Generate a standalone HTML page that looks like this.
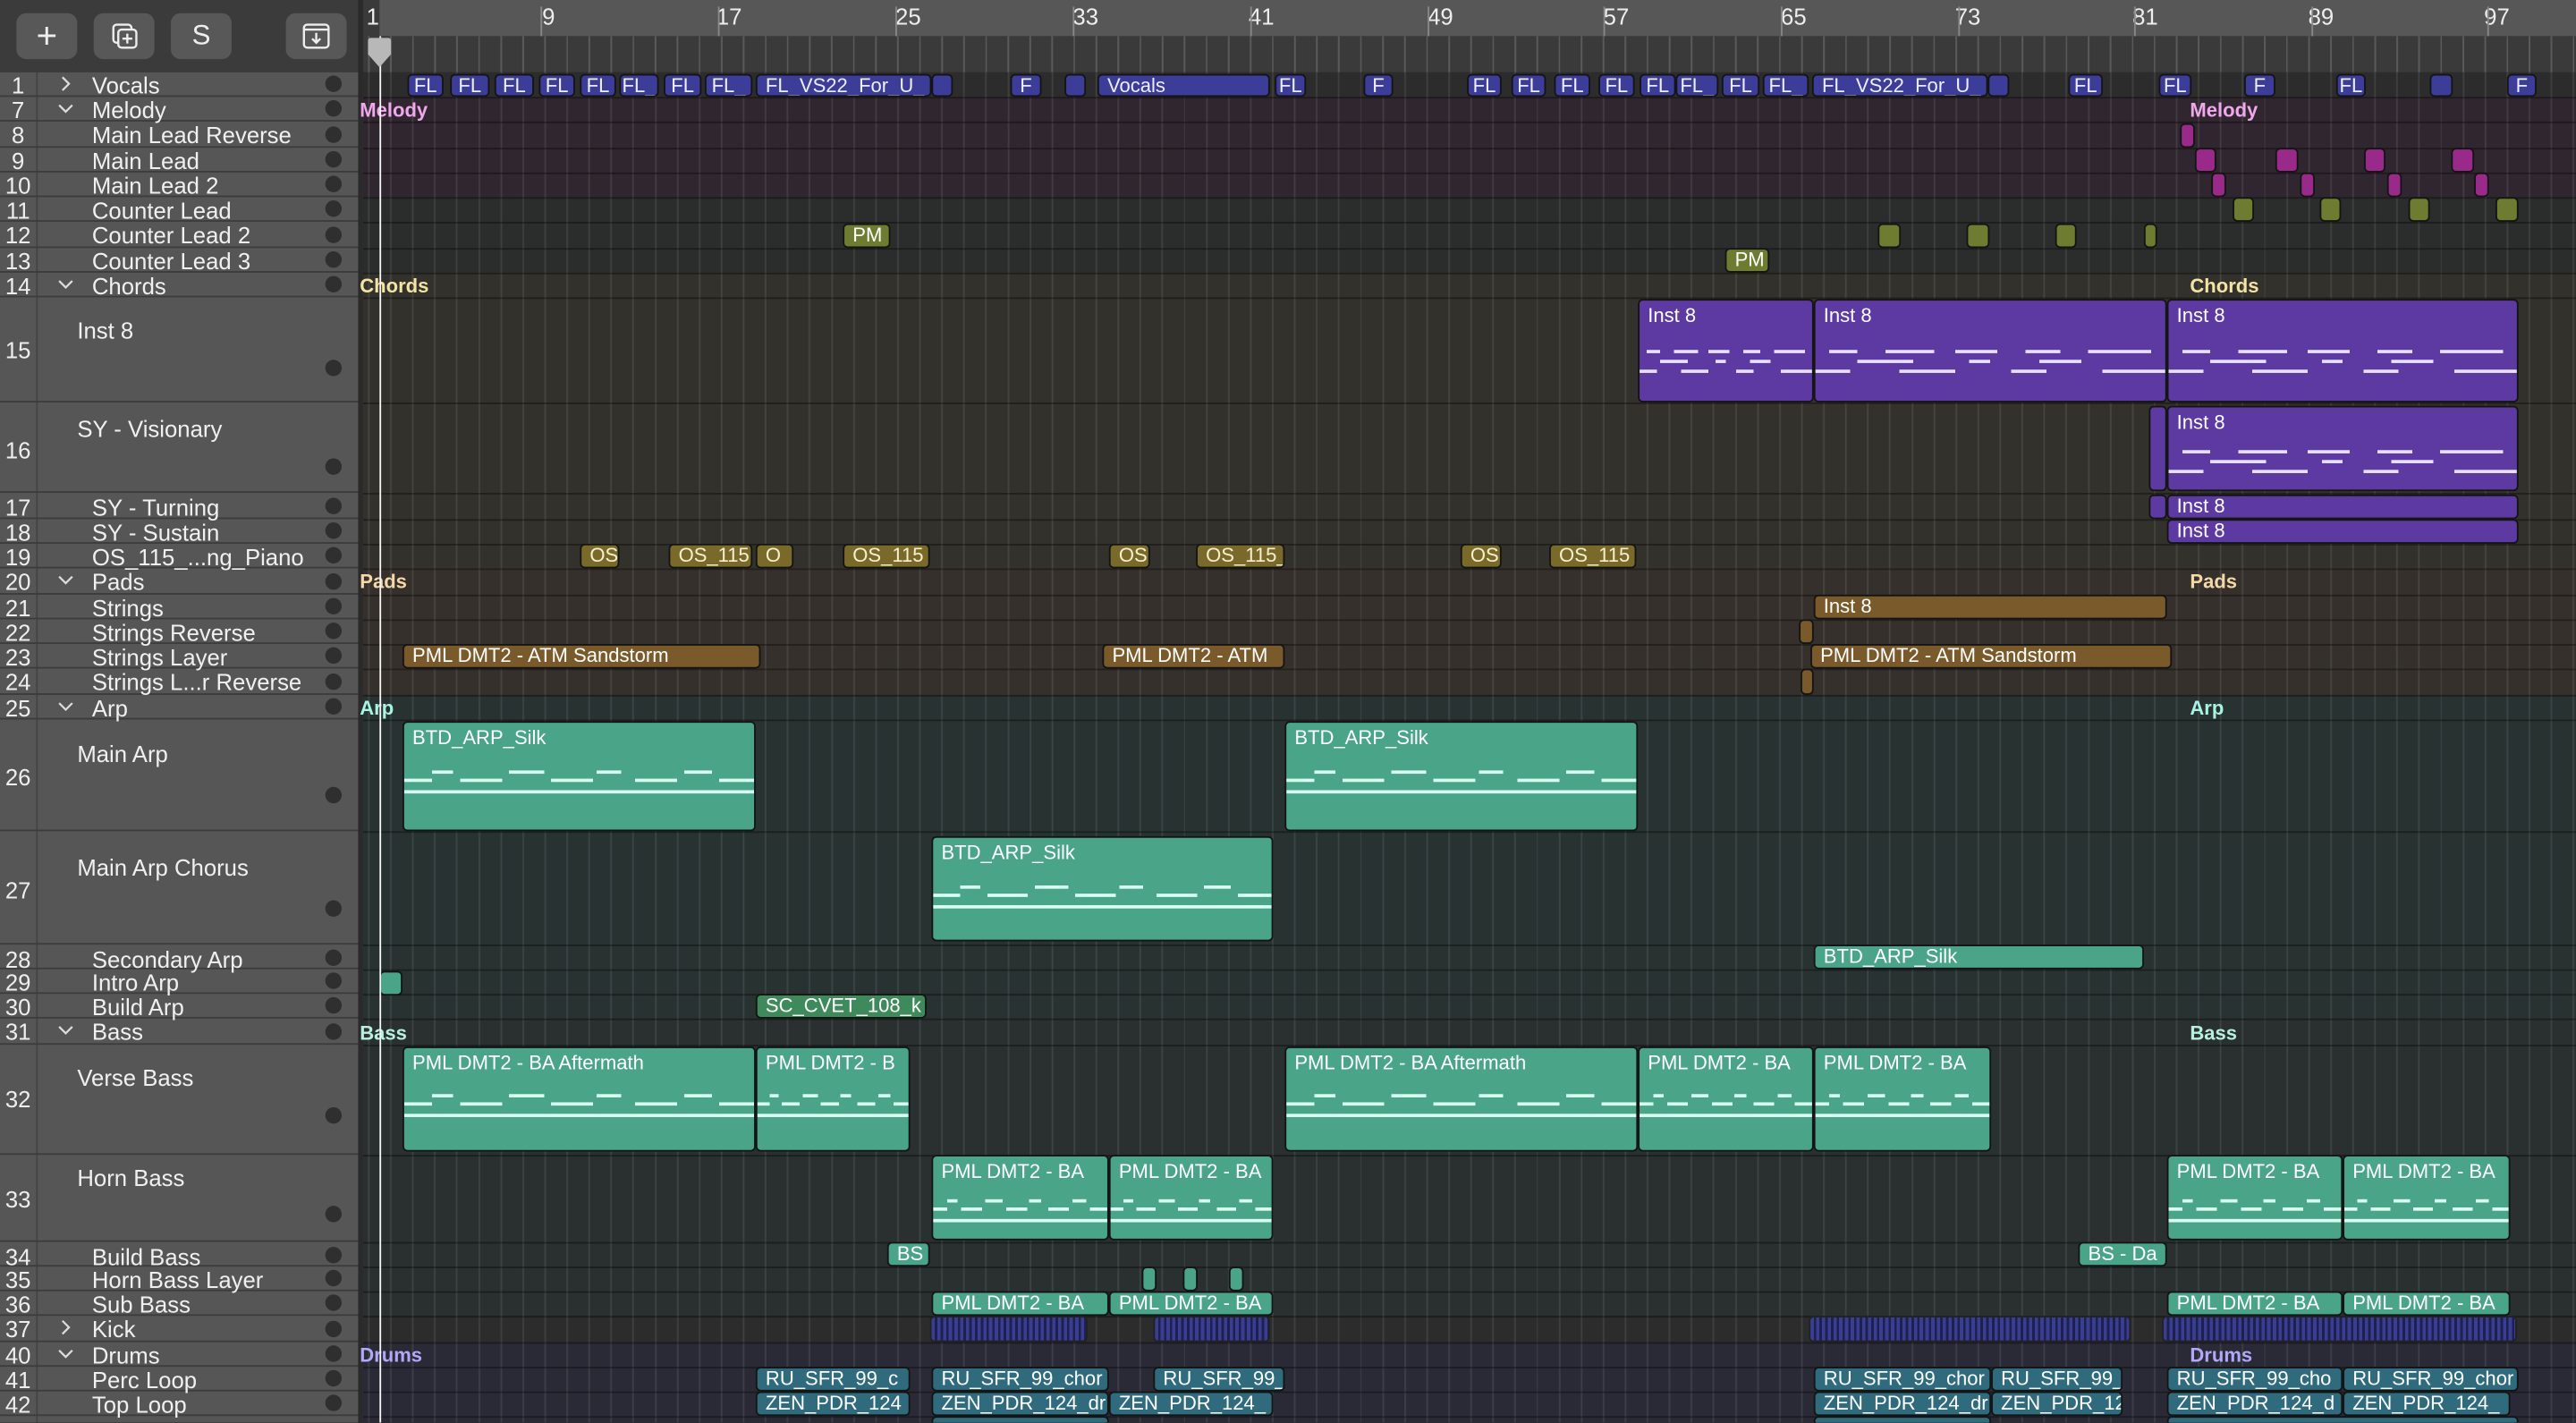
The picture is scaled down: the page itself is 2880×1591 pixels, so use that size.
<!DOCTYPE html>
<html><head><meta charset="utf-8"><style>
html,body{margin:0;padding:0;background:#2b2b2b;overflow:hidden}
#w{position:absolute;left:0;top:0;width:1568px;height:866px;transform:scale(1.836735);transform-origin:0 0;font-family:"Liberation Sans",sans-serif;overflow:hidden;background:#2b2b2b}
.a{position:absolute}
.tl{position:absolute;left:0;width:221px;background:#565656;color:#f0f0f0;font-size:14px}
.row{position:absolute;left:0;width:221px;border-bottom:1.5px solid #3c3c3c;box-sizing:border-box}
.n{position:absolute;left:0;width:22px;text-align:center;color:#eee;font-size:14px}
.nm{position:absolute;left:56px;white-space:nowrap}
.dot{position:absolute;left:198px;width:10px;height:10px;border-radius:50%;background:#2f2f2f}
.chev{position:absolute;left:35px;top:2px}
.bg{position:absolute;left:221px;right:0}
.hl{position:absolute;left:221px;right:0;height:1px;background:rgba(0,0,0,0.35)}
.r{position:absolute;box-sizing:border-box;border:1px solid #141414;border-radius:3px;color:#fff;font-size:12px;padding-left:5px;overflow:hidden;white-space:nowrap;line-height:13px}
.v{background:#3b3d98;color:#eef;text-align:center;padding:0}
.p{background:#5d3aa2}
.b{background:#7a5a2a}
.t{background:#4aa488}
.o{background:#7a6a2a;color:#f4f0d0}
.g{background:#6d7c30}
.m{background:#9a2a8a}
.d{background:#2f6b7c}
.k{background:repeating-linear-gradient(90deg,#3a3e90 0 2px,#1e2050 2px 3.5px);border-color:#222}
.lbl{position:absolute;font-size:12px;font-weight:bold}
.notes{position:absolute;left:0;right:0;height:20px;background:
linear-gradient(90deg,transparent 0 4%,#e8e0ff 4% 12%,transparent 12% 20%,#e8e0ff 20% 34%,transparent 34% 40%,#e8e0ff 40% 52%,transparent 52% 60%,#e8e0ff 60% 70%,transparent 70% 78%,#e8e0ff 78% 96%,transparent 96%) 0 2px/100% 2px no-repeat,
linear-gradient(90deg,transparent 0 12%,#e8e0ff 12% 28%,transparent 28% 44%,#e8e0ff 44% 50%,transparent 50% 64%,#e8e0ff 64% 76%,transparent 76%) 0 8px/100% 2px no-repeat,
linear-gradient(90deg,#e8e0ff 0 10%,transparent 10% 24%,#e8e0ff 24% 40%,transparent 40% 56%,#e8e0ff 56% 66%,transparent 66% 82%,#e8e0ff 82% 100%) 0 14px/100% 2px no-repeat}
.t .notes{background:
linear-gradient(90deg,transparent 0 8%,#d8fff0 8% 14%,transparent 14% 30%,#d8fff0 30% 40%,transparent 40% 55%,#d8fff0 55% 62%,transparent 62% 80%,#d8fff0 80% 88%,transparent 88%) 0 2px/100% 2px no-repeat,
linear-gradient(90deg,#d8fff0 0 8%,transparent 8% 16%,#d8fff0 16% 28%,transparent 28% 42%,#d8fff0 42% 54%,transparent 54% 66%,#d8fff0 66% 78%,transparent 78% 90%,#d8fff0 90%) 0 7px/100% 2px no-repeat,
linear-gradient(90deg,#d8fff0 0 100%) 0 14px/100% 2px no-repeat}
</style></head><body><div id="w">

<div class="a" style="left:0;top:0;width:221px;height:44px;background:#3b3b3b"></div>
<div class="a" style="left:10px;top:8px;width:37px;height:28px;background:#585858;border-radius:6px;color:#eee;font-size:22px;text-align:center;line-height:27px">+</div>
<div class="a" style="left:57px;top:8px;width:37px;height:28px;background:#585858;border-radius:6px">
<svg width="37" height="28" viewBox="0 0 37 28"><rect x="12" y="7" width="11" height="11" rx="2" fill="none" stroke="#eee" stroke-width="1.3"/><rect x="15" y="10" width="11" height="11" rx="2" fill="#585858" stroke="#eee" stroke-width="1.3"/><path d="M20.5 12.5v6M17.5 15.5h6" stroke="#eee" stroke-width="1.3"/></svg></div>
<div class="a" style="left:104px;top:8px;width:37px;height:28px;background:#585858;border-radius:6px;color:#eee;font-size:17px;text-align:center;line-height:28px">S</div>
<div class="a" style="left:174px;top:8px;width:37px;height:28px;background:#585858;border-radius:6px">
<svg width="37" height="28" viewBox="0 0 37 28"><rect x="11" y="7" width="15" height="14" rx="2" fill="none" stroke="#eee" stroke-width="1.3"/><path d="M11 10h15M18.5 12v6M16 15.5l2.5 2.5 2.5-2.5" fill="none" stroke="#eee" stroke-width="1.3"/></svg></div>

<div class="a" style="left:221px;top:0;right:0;height:22px;background:#575757"></div>
<div class="a" style="left:221px;top:22px;right:0;height:22px;background:#3a3a3a;background-image:repeating-linear-gradient(90deg,#5a5a5a 0 1px,transparent 1px 13.42px);background-position:3px 0"></div>
<div class="a" style="left:221px;top:0;width:10px;height:22px;background:#3a3a3a"></div>
<div class="a" style="left:0;top:0;width:1568px;height:22px;color:#eee;font-size:14px">
<span class="a" style="left:223px;top:2px">1</span><span class="a" style="left:330px;top:2px">9</span><span class="a" style="left:436px;top:2px">17</span><span class="a" style="left:545px;top:2px">25</span><span class="a" style="left:653px;top:2px">33</span><span class="a" style="left:760px;top:2px">41</span><span class="a" style="left:869px;top:2px">49</span><span class="a" style="left:976px;top:2px">57</span><span class="a" style="left:1084px;top:2px">65</span><span class="a" style="left:1190px;top:2px">73</span><span class="a" style="left:1298px;top:2px">81</span><span class="a" style="left:1405px;top:2px">89</span><span class="a" style="left:1512px;top:2px">97</span>
</div>
<div class="a" style="left:329px;top:4px;width:1px;height:18px;background:#888"></div>
<div class="a" style="left:437px;top:4px;width:1px;height:18px;background:#888"></div>
<div class="a" style="left:545px;top:4px;width:1px;height:18px;background:#888"></div>
<div class="a" style="left:653px;top:4px;width:1px;height:18px;background:#888"></div>
<div class="a" style="left:761px;top:4px;width:1px;height:18px;background:#888"></div>
<div class="a" style="left:869px;top:4px;width:1px;height:18px;background:#888"></div>
<div class="a" style="left:976px;top:4px;width:1px;height:18px;background:#888"></div>
<div class="a" style="left:1084px;top:4px;width:1px;height:18px;background:#888"></div>
<div class="a" style="left:1192px;top:4px;width:1px;height:18px;background:#888"></div>
<div class="a" style="left:1299px;top:4px;width:1px;height:18px;background:#888"></div>
<div class="a" style="left:1407px;top:4px;width:1px;height:18px;background:#888"></div>
<div class="a" style="left:1514px;top:4px;width:1px;height:18px;background:#888"></div>

<div class="bg" style="top:44px;height:15px;background:#2c2c2c"></div>
<div class="bg" style="top:59px;height:61px;background:#30262f"></div>
<div class="bg" style="top:120px;height:46px;background:#2b2c2c"></div>
<div class="bg" style="top:166px;height:180px;background:#33312b"></div>
<div class="bg" style="top:346px;height:77px;background:#35302b"></div>
<div class="bg" style="top:423px;height:197px;background:#283231"></div>
<div class="bg" style="top:620px;height:181px;background:#29302f"></div>
<div class="bg" style="top:801px;height:16px;background:#2c2c2c"></div>
<div class="bg" style="top:817px;height:49px;background:#2a2a36"></div>
<div class="bg" style="top:44px;bottom:0;background-image:repeating-linear-gradient(90deg,rgba(255,255,255,0.09) 0 1px,transparent 1px 13.42px);background-position:3px 0"></div>
<div class="hl" style="top:59px"></div><div class="hl" style="top:74px"></div><div class="hl" style="top:90px"></div><div class="hl" style="top:105px"></div><div class="hl" style="top:120px"></div><div class="hl" style="top:135px"></div><div class="hl" style="top:151px"></div><div class="hl" style="top:166px"></div><div class="hl" style="top:181px"></div><div class="hl" style="top:245px"></div><div class="hl" style="top:300px"></div><div class="hl" style="top:316px"></div><div class="hl" style="top:331px"></div><div class="hl" style="top:346px"></div><div class="hl" style="top:362px"></div><div class="hl" style="top:377px"></div><div class="hl" style="top:392px"></div><div class="hl" style="top:407px"></div><div class="hl" style="top:423px"></div><div class="hl" style="top:438px"></div><div class="hl" style="top:506px"></div><div class="hl" style="top:575px"></div><div class="hl" style="top:590px"></div><div class="hl" style="top:605px"></div><div class="hl" style="top:620px"></div><div class="hl" style="top:636px"></div><div class="hl" style="top:703px"></div><div class="hl" style="top:756px"></div><div class="hl" style="top:771px"></div><div class="hl" style="top:786px"></div><div class="hl" style="top:801px"></div><div class="hl" style="top:817px"></div><div class="hl" style="top:832px"></div><div class="hl" style="top:847px"></div><div class="hl" style="top:862px"></div>

<div class="tl" style="top:44px;height:822px">
<div class="a" style="left:22px;top:0;width:1px;height:822px;background:#444"></div>
</div>
<div class="a" style="left:0;top:44px;width:221px;height:822px;color:#f0f0f0;font-size:14px">
<div class="row" style="top:0;height:15px"><span class="n">1</span><svg class="chev" width="10" height="10" viewBox="0 0 10 10"><path d="M3 1l4 4-4 4" fill="none" stroke="#ddd" stroke-width="1.2"/></svg><span class="nm">Vocals</span><span class="dot" style="top:2px"></span></div>
<div class="row" style="top:15px;height:15px"><span class="n">7</span><svg class="chev" width="10" height="10" viewBox="0 0 10 10"><path d="M1 3l4 4 4-4" fill="none" stroke="#ddd" stroke-width="1.2"/></svg><span class="nm">Melody</span><span class="dot" style="top:2px"></span></div>
<div class="row" style="top:30px;height:16px"><span class="n">8</span><span class="nm">Main Lead Reverse</span><span class="dot" style="top:3px"></span></div>
<div class="row" style="top:46px;height:15px"><span class="n">9</span><span class="nm">Main Lead</span><span class="dot" style="top:2px"></span></div>
<div class="row" style="top:61px;height:15px"><span class="n">10</span><span class="nm">Main Lead 2</span><span class="dot" style="top:2px"></span></div>
<div class="row" style="top:76px;height:15px"><span class="n">11</span><span class="nm">Counter Lead</span><span class="dot" style="top:2px"></span></div>
<div class="row" style="top:91px;height:16px"><span class="n">12</span><span class="nm">Counter Lead 2</span><span class="dot" style="top:3px"></span></div>
<div class="row" style="top:107px;height:15px"><span class="n">13</span><span class="nm">Counter Lead 3</span><span class="dot" style="top:2px"></span></div>
<div class="row" style="top:122px;height:15px"><span class="n">14</span><svg class="chev" width="10" height="10" viewBox="0 0 10 10"><path d="M1 3l4 4 4-4" fill="none" stroke="#ddd" stroke-width="1.2"/></svg><span class="nm">Chords</span><span class="dot" style="top:2px"></span></div>
<div class="row" style="top:137px;height:64px"><span class="n" style="top:24px">15</span><span class="nm" style="left:47px;top:12px">Inst 8</span><span class="dot" style="top:38px"></span></div>
<div class="row" style="top:201px;height:55px"><span class="n" style="top:21px">16</span><span class="nm" style="left:47px;top:8px">SY - Visionary</span><span class="dot" style="top:34px"></span></div>
<div class="row" style="top:256px;height:16px"><span class="n" style="top:1px">17</span><span class="nm" style="top:1px">SY - Turning</span><span class="dot" style="top:3px"></span></div>
<div class="row" style="top:272px;height:15px"><span class="n">18</span><span class="nm">SY - Sustain</span><span class="dot" style="top:2px"></span></div>
<div class="row" style="top:287px;height:15px"><span class="n">19</span><span class="nm">OS_115_...ng_Piano</span><span class="dot" style="top:2px"></span></div>
<div class="row" style="top:302px;height:16px"><span class="n">20</span><svg class="chev" width="10" height="10" viewBox="0 0 10 10"><path d="M1 3l4 4 4-4" fill="none" stroke="#ddd" stroke-width="1.2"/></svg><span class="nm">Pads</span><span class="dot" style="top:3px"></span></div>
<div class="row" style="top:318px;height:15px"><span class="n">21</span><span class="nm">Strings</span><span class="dot" style="top:2px"></span></div>
<div class="row" style="top:333px;height:15px"><span class="n">22</span><span class="nm">Strings Reverse</span><span class="dot" style="top:2px"></span></div>
<div class="row" style="top:348px;height:15px"><span class="n">23</span><span class="nm">Strings Layer</span><span class="dot" style="top:2px"></span></div>
<div class="row" style="top:363px;height:16px"><span class="n">24</span><span class="nm">Strings L...r Reverse</span><span class="dot" style="top:3px"></span></div>
<div class="row" style="top:379px;height:15px"><span class="n">25</span><svg class="chev" width="10" height="10" viewBox="0 0 10 10"><path d="M1 3l4 4 4-4" fill="none" stroke="#ddd" stroke-width="1.2"/></svg><span class="nm">Arp</span><span class="dot" style="top:2px"></span></div>
<div class="row" style="top:394px;height:68px"><span class="n" style="top:27px">26</span><span class="nm" style="left:47px;top:13px">Main Arp</span><span class="dot" style="top:41px"></span></div>
<div class="row" style="top:462px;height:69px"><span class="n" style="top:28px">27</span><span class="nm" style="left:47px;top:14px">Main Arp Chorus</span><span class="dot" style="top:42px"></span></div>
<div class="row" style="top:531px;height:15px"><span class="n" style="top:1px">28</span><span class="nm" style="top:1px">Secondary Arp</span><span class="dot" style="top:3px"></span></div>
<div class="row" style="top:546px;height:15px"><span class="n">29</span><span class="nm">Intro Arp</span><span class="dot" style="top:2px"></span></div>
<div class="row" style="top:561px;height:15px"><span class="n">30</span><span class="nm">Build Arp</span><span class="dot" style="top:2px"></span></div>
<div class="row" style="top:576px;height:16px"><span class="n">31</span><svg class="chev" width="10" height="10" viewBox="0 0 10 10"><path d="M1 3l4 4 4-4" fill="none" stroke="#ddd" stroke-width="1.2"/></svg><span class="nm">Bass</span><span class="dot" style="top:3px"></span></div>
<div class="row" style="top:592px;height:67px"><span class="n" style="top:25px">32</span><span class="nm" style="left:47px;top:12px">Verse Bass</span><span class="dot" style="top:38px"></span></div>
<div class="row" style="top:659px;height:53px"><span class="n" style="top:19px">33</span><span class="nm" style="left:47px;top:6px">Horn Bass</span><span class="dot" style="top:31px"></span></div>
<div class="row" style="top:712px;height:15px"><span class="n" style="top:1px">34</span><span class="nm" style="top:1px">Build Bass</span><span class="dot" style="top:3px"></span></div>
<div class="row" style="top:727px;height:15px"><span class="n">35</span><span class="nm">Horn Bass Layer</span><span class="dot" style="top:2px"></span></div>
<div class="row" style="top:742px;height:15px"><span class="n">36</span><span class="nm">Sub Bass</span><span class="dot" style="top:2px"></span></div>
<div class="row" style="top:757px;height:16px"><span class="n">37</span><svg class="chev" width="10" height="10" viewBox="0 0 10 10"><path d="M3 1l4 4-4 4" fill="none" stroke="#ddd" stroke-width="1.2"/></svg><span class="nm">Kick</span><span class="dot" style="top:3px"></span></div>
<div class="row" style="top:773px;height:15px"><span class="n">40</span><svg class="chev" width="10" height="10" viewBox="0 0 10 10"><path d="M1 3l4 4 4-4" fill="none" stroke="#ddd" stroke-width="1.2"/></svg><span class="nm">Drums</span><span class="dot" style="top:2px"></span></div>
<div class="row" style="top:788px;height:15px"><span class="n">41</span><span class="nm">Perc Loop</span><span class="dot" style="top:2px"></span></div>
<div class="row" style="top:803px;height:15px"><span class="n">42</span><span class="nm">Top Loop</span><span class="dot" style="top:2px"></span></div>
</div>
<div class="a" style="left:218px;top:0;width:3px;height:866px;background:#2a2a2a"></div>

<div class="r v" style="left:248px;top:45px;width:22px;height:14px">FL</div>
<div class="r v" style="left:274px;top:45px;width:24px;height:14px">FL</div>
<div class="r v" style="left:301px;top:45px;width:24px;height:14px">FL</div>
<div class="r v" style="left:328px;top:45px;width:22px;height:14px">FL</div>
<div class="r v" style="left:353px;top:45px;width:22px;height:14px">FL</div>
<div class="r v" style="left:377px;top:45px;width:24px;height:14px">FL_</div>
<div class="r v" style="left:404px;top:45px;width:23px;height:14px">FL</div>
<div class="r v" style="left:429px;top:45px;width:29px;height:14px">FL_</div>
<div class="r v" style="left:460px;top:45px;width:107px;height:14px;text-align:left;padding-left:5px">FL_VS22_For_U_</div>
<div class="r v" style="left:567px;top:45px;width:13px;height:14px"></div>
<div class="r v" style="left:615px;top:45px;width:19px;height:14px">F</div>
<div class="r v" style="left:648px;top:45px;width:13px;height:14px"></div>
<div class="r v" style="left:668px;top:45px;width:105px;height:14px;text-align:left;padding-left:5px">Vocals</div>
<div class="r v" style="left:776px;top:45px;width:19px;height:14px">FL</div>
<div class="r v" style="left:830px;top:45px;width:18px;height:14px">F</div>
<div class="r v" style="left:893px;top:45px;width:21px;height:14px">FL</div>
<div class="r v" style="left:920px;top:45px;width:21px;height:14px">FL</div>
<div class="r v" style="left:946px;top:45px;width:22px;height:14px">FL</div>
<div class="r v" style="left:973px;top:45px;width:22px;height:14px">FL</div>
<div class="r v" style="left:998px;top:45px;width:22px;height:14px">FL</div>
<div class="r v" style="left:1020px;top:45px;width:26px;height:14px">FL_</div>
<div class="r v" style="left:1048px;top:45px;width:23px;height:14px">FL</div>
<div class="r v" style="left:1073px;top:45px;width:28px;height:14px">FL_</div>
<div class="r v" style="left:1103px;top:45px;width:107px;height:14px;text-align:left;padding-left:5px">FL_VS22_For_U_</div>
<div class="r v" style="left:1210px;top:45px;width:13px;height:14px"></div>
<div class="r v" style="left:1259px;top:45px;width:21px;height:14px">FL</div>
<div class="r v" style="left:1314px;top:45px;width:20px;height:14px">FL</div>
<div class="r v" style="left:1366px;top:45px;width:19px;height:14px">F</div>
<div class="r v" style="left:1422px;top:45px;width:18px;height:14px">FL</div>
<div class="r v" style="left:1479px;top:45px;width:14px;height:14px"></div>
<div class="r v" style="left:1526px;top:45px;width:18px;height:14px">F</div>

<div class="lbl" style="left:219px;top:60px;color:#f0a8ec">Melody</div>
<div class="lbl" style="left:1333px;top:60px;color:#f0a8ec">Melody</div>
<div class="lbl" style="left:219px;top:167px;color:#f4e4a4">Chords</div>
<div class="lbl" style="left:1333px;top:167px;color:#f4e4a4">Chords</div>
<div class="lbl" style="left:219px;top:347px;color:#f4d8a8">Pads</div>
<div class="lbl" style="left:1333px;top:347px;color:#f4d8a8">Pads</div>
<div class="lbl" style="left:219px;top:424px;color:#a8f4e4">Arp</div>
<div class="lbl" style="left:1333px;top:424px;color:#a8f4e4">Arp</div>
<div class="lbl" style="left:219px;top:622px;color:#b8f0e0">Bass</div>
<div class="lbl" style="left:1333px;top:622px;color:#b8f0e0">Bass</div>
<div class="lbl" style="left:219px;top:818px;color:#b0a8f8">Drums</div>
<div class="lbl" style="left:1333px;top:818px;color:#b0a8f8">Drums</div>

<div class="r m" style="left:1327px;top:75px;width:9px;height:15px"></div>
<div class="r m" style="left:1336px;top:90px;width:13px;height:15px"></div>
<div class="r m" style="left:1385px;top:90px;width:14px;height:15px"></div>
<div class="r m" style="left:1439px;top:90px;width:13px;height:15px"></div>
<div class="r m" style="left:1492px;top:90px;width:14px;height:15px"></div>
<div class="r m" style="left:1346px;top:105px;width:9px;height:15px"></div>
<div class="r m" style="left:1400px;top:105px;width:9px;height:15px"></div>
<div class="r m" style="left:1453px;top:105px;width:9px;height:15px"></div>
<div class="r m" style="left:1506px;top:105px;width:9px;height:15px"></div>
<div class="r g" style="left:1359px;top:120px;width:13px;height:15px"></div>
<div class="r g" style="left:1412px;top:120px;width:13px;height:15px"></div>
<div class="r g" style="left:1466px;top:120px;width:13px;height:15px"></div>
<div class="r g" style="left:1519px;top:120px;width:14px;height:15px"></div>
<div class="r g" style="left:513px;top:136px;width:29px;height:15px">PM</div>
<div class="r g" style="left:1143px;top:136px;width:14px;height:15px"></div>
<div class="r g" style="left:1197px;top:136px;width:14px;height:15px"></div>
<div class="r g" style="left:1251px;top:136px;width:13px;height:15px"></div>
<div class="r g" style="left:1305px;top:136px;width:8px;height:15px"></div>
<div class="r g" style="left:1050px;top:151px;width:27px;height:15px">PM</div>

<div class="r p" style="left:997px;top:182px;width:107px;height:63px;padding-top:3px">Inst 8<div class="notes" style="top:28px"></div></div>
<div class="r p" style="left:1104px;top:182px;width:215px;height:63px;padding-top:3px">Inst 8<div class="notes" style="top:28px"></div></div>
<div class="r p" style="left:1319px;top:182px;width:214px;height:63px;padding-top:3px">Inst 8<div class="notes" style="top:28px"></div></div>
<div class="r p" style="left:1308px;top:247px;width:11px;height:52px"></div>
<div class="r p" style="left:1319px;top:247px;width:214px;height:52px;padding-top:3px">Inst 8<div class="notes" style="top:24px"></div></div>
<div class="r p" style="left:1308px;top:301px;width:11px;height:15px"></div>
<div class="r p" style="left:1319px;top:301px;width:214px;height:15px">Inst 8</div>
<div class="r p" style="left:1319px;top:316px;width:214px;height:15px">Inst 8</div>
<div class="r o" style="left:353px;top:331px;width:24px;height:15px">OS</div>
<div class="r o" style="left:407px;top:331px;width:51px;height:15px">OS_115</div>
<div class="r o" style="left:460px;top:331px;width:23px;height:15px">O</div>
<div class="r o" style="left:513px;top:331px;width:53px;height:15px">OS_115</div>
<div class="r o" style="left:675px;top:331px;width:25px;height:15px">OS</div>
<div class="r o" style="left:728px;top:331px;width:54px;height:15px">OS_115_</div>
<div class="r o" style="left:889px;top:331px;width:25px;height:15px">OS</div>
<div class="r o" style="left:943px;top:331px;width:53px;height:15px">OS_115</div>

<div class="r b" style="left:1104px;top:362px;width:215px;height:15px">Inst 8</div>
<div class="r b" style="left:1095px;top:377px;width:9px;height:15px;padding:0"></div>
<div class="r b" style="left:245px;top:392px;width:218px;height:15px">PML DMT2 - ATM Sandstorm</div>
<div class="r b" style="left:671px;top:392px;width:111px;height:15px">PML DMT2 - ATM</div>
<div class="r b" style="left:1102px;top:392px;width:220px;height:15px">PML DMT2 - ATM Sandstorm</div>
<div class="r b" style="left:1096px;top:407px;width:8px;height:16px;padding:0"></div>

<div class="r t" style="left:245px;top:439px;width:215px;height:67px;padding-top:3px">BTD_ARP_Silk<div class="notes" style="top:27px"></div></div>
<div class="r t" style="left:782px;top:439px;width:215px;height:67px;padding-top:3px">BTD_ARP_Silk<div class="notes" style="top:27px"></div></div>
<div class="r t" style="left:567px;top:509px;width:208px;height:64px;padding-top:3px">BTD_ARP_Silk<div class="notes" style="top:27px"></div></div>
<div class="r t" style="left:1104px;top:575px;width:201px;height:15px">BTD_ARP_Silk</div>
<div class="r t" style="left:231px;top:591px;width:14px;height:15px;padding:0"></div>
<div class="r" style="left:460px;top:605px;width:104px;height:15px;background:#3f8a5a">SC_CVET_108_k</div>

<div class="r t" style="left:245px;top:637px;width:215px;height:64px;padding-top:3px">PML DMT2 - BA Aftermath<div class="notes" style="top:26px"></div></div>
<div class="r t" style="left:460px;top:637px;width:94px;height:64px;padding-top:3px">PML DMT2 - B<div class="notes" style="top:26px"></div></div>
<div class="r t" style="left:782px;top:637px;width:215px;height:64px;padding-top:3px">PML DMT2 - BA Aftermath<div class="notes" style="top:26px"></div></div>
<div class="r t" style="left:997px;top:637px;width:107px;height:64px;padding-top:3px">PML DMT2 - BA<div class="notes" style="top:26px"></div></div>
<div class="r t" style="left:1104px;top:637px;width:108px;height:64px;padding-top:3px">PML DMT2 - BA<div class="notes" style="top:26px"></div></div>
<div class="r t" style="left:567px;top:703px;width:108px;height:52px;padding-top:3px">PML DMT2 - BA<div class="notes" style="top:24px"></div></div>
<div class="r t" style="left:675px;top:703px;width:100px;height:52px;padding-top:3px">PML DMT2 - BA<div class="notes" style="top:24px"></div></div>
<div class="r t" style="left:1319px;top:703px;width:107px;height:52px;padding-top:3px">PML DMT2 - BA<div class="notes" style="top:24px"></div></div>
<div class="r t" style="left:1426px;top:703px;width:102px;height:52px;padding-top:3px">PML DMT2 - BA<div class="notes" style="top:24px"></div></div>
<div class="r t" style="left:540px;top:756px;width:26px;height:15px">BS</div>
<div class="r t" style="left:1265px;top:756px;width:54px;height:15px">BS - Da</div>
<div class="r t" style="left:695px;top:771px;width:9px;height:15px;padding:0"></div>
<div class="r t" style="left:720px;top:771px;width:9px;height:15px;padding:0"></div>
<div class="r t" style="left:748px;top:771px;width:9px;height:15px;padding:0"></div>
<div class="r t" style="left:567px;top:786px;width:108px;height:15px">PML DMT2 - BA</div>
<div class="r t" style="left:675px;top:786px;width:100px;height:15px">PML DMT2 - BA</div>
<div class="r t" style="left:1319px;top:786px;width:107px;height:15px">PML DMT2 - BA</div>
<div class="r t" style="left:1426px;top:786px;width:102px;height:15px">PML DMT2 - BA</div>

<div class="r k" style="left:566px;top:801px;width:96px;height:16px"></div>
<div class="r k" style="left:702px;top:801px;width:71px;height:16px"></div>
<div class="r k" style="left:1101px;top:801px;width:196px;height:16px"></div>
<div class="r k" style="left:1316px;top:801px;width:216px;height:16px"></div>

<div class="r d" style="left:460px;top:832px;width:94px;height:15px">RU_SFR_99_c</div>
<div class="r d" style="left:567px;top:832px;width:108px;height:15px">RU_SFR_99_chor</div>
<div class="r d" style="left:702px;top:832px;width:80px;height:15px">RU_SFR_99_</div>
<div class="r d" style="left:1104px;top:832px;width:108px;height:15px">RU_SFR_99_chor</div>
<div class="r d" style="left:1212px;top:832px;width:80px;height:15px">RU_SFR_99_</div>
<div class="r d" style="left:1319px;top:832px;width:107px;height:15px">RU_SFR_99_cho</div>
<div class="r d" style="left:1426px;top:832px;width:107px;height:15px">RU_SFR_99_chor</div>
<div class="r d" style="left:460px;top:847px;width:94px;height:15px">ZEN_PDR_124</div>
<div class="r d" style="left:567px;top:847px;width:108px;height:15px">ZEN_PDR_124_dr</div>
<div class="r d" style="left:675px;top:847px;width:100px;height:15px">ZEN_PDR_124_</div>
<div class="r d" style="left:1104px;top:847px;width:108px;height:15px">ZEN_PDR_124_dr</div>
<div class="r d" style="left:1212px;top:847px;width:80px;height:15px">ZEN_PDR_12</div>
<div class="r d" style="left:1319px;top:847px;width:107px;height:15px">ZEN_PDR_124_d</div>
<div class="r d" style="left:1426px;top:847px;width:102px;height:15px">ZEN_PDR_124_</div>
<div class="r d" style="left:567px;top:862px;width:108px;height:6px"></div>
<div class="r d" style="left:1104px;top:862px;width:108px;height:6px"></div>
<div class="r d" style="left:1319px;top:862px;width:214px;height:6px"></div>

<div class="a" style="left:230.5px;top:22px;width:1.2px;height:844px;background:#f4f4f4"></div>
<svg class="a" style="left:221px;top:23px" width="20" height="20" viewBox="0 0 20 20"><path d="M3 2Q3 0 5 0H15Q17 0 17 2V10L10 18L3 10Z" fill="#b8b8b8"/></svg>
</div></body></html>
